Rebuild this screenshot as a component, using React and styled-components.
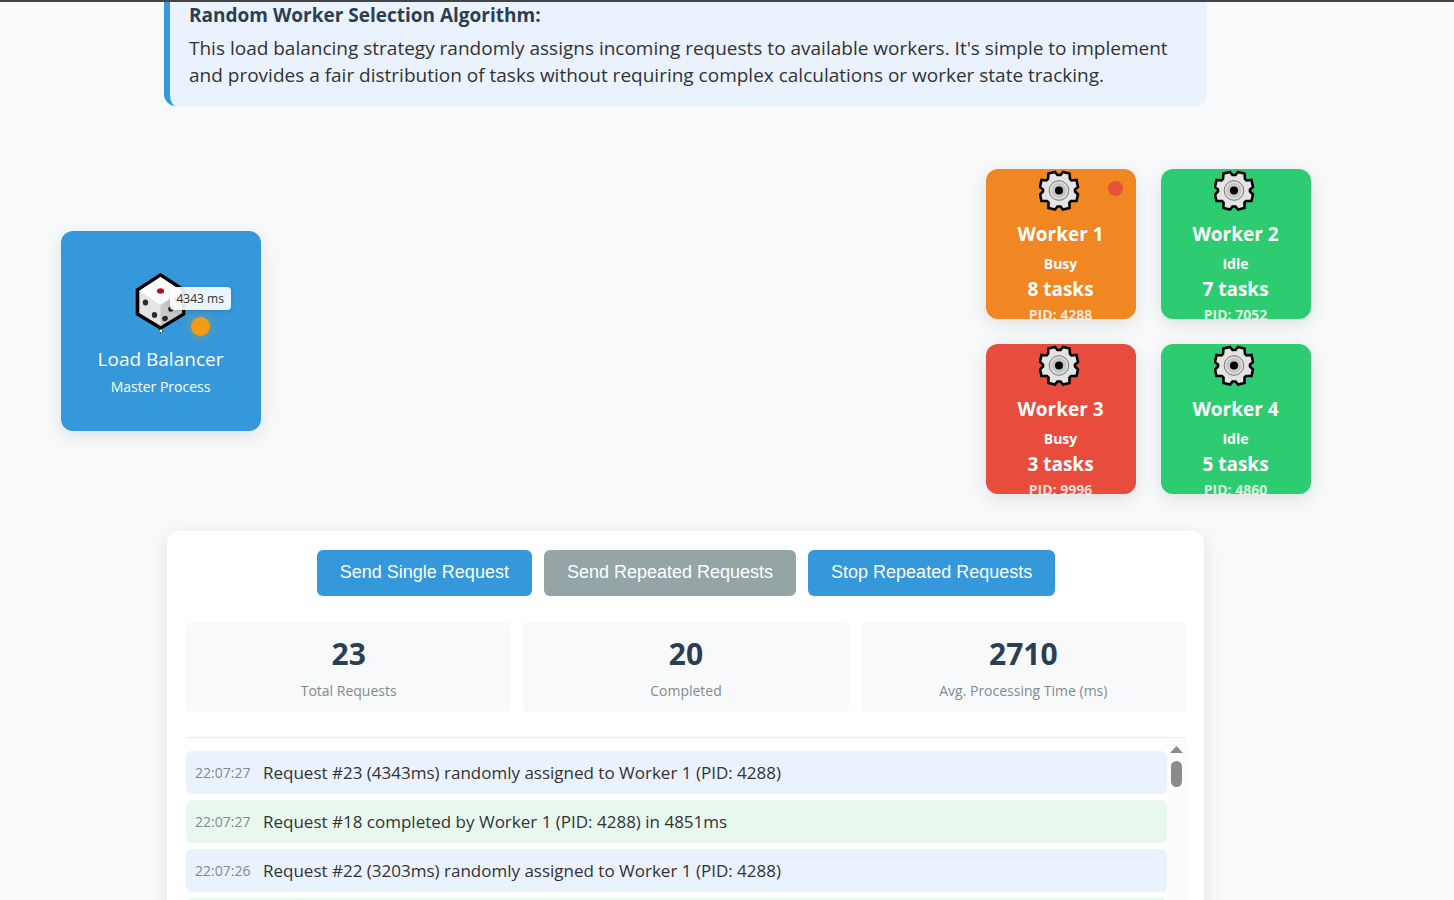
import React from "react";
import styled, { createGlobalStyle } from "styled-components";

const GlobalStyle = createGlobalStyle`
  *, *::before, *::after { box-sizing: border-box; }
  body {
    margin: 0;
    background: #f8f9fb;
    color: #333;
    font-family: "Segoe UI", "Open Sans", "Noto Sans", sans-serif;
  }
`;

const Page = styled.div`
  height: 100vh;
  overflow: hidden;
  border-top: 2px solid #444;
  padding-right: 83px;
  display: flex;
  flex-direction: column;
  align-items: center;
`;

const Banner = styled.section`
  flex: none;
  width: 80%;
  max-width: 1043px;
  height: 104px;
  padding: 0 19px;
  border-left: 6px solid #3498db;
  border-radius: 0 0 12px 12px;
  background: #eaf2fd;
`;

const BannerTitle = styled.h2`
  margin: 0 0 6px;
  color: #2c3e50;
  font-size: 19px;
  line-height: 27px;
  font-weight: 700;
`;

const BannerText = styled.p`
  margin: 0;
  font-size: 19px;
  line-height: 27px;
`;

const Arena = styled.main`
  flex: none;
  width: calc(100% - 121px);
  max-width: 1250px;
  margin: 63px 0 37px;
  display: flex;
  align-items: center;
  justify-content: space-between;
`;

const Balancer = styled.section`
  position: relative;
  width: 200px;
  height: 200px;
  margin-bottom: 1px;
  padding-top: 42px;
  display: flex;
  flex-direction: column;
  align-items: center;
  border-radius: 12px;
  background: #3498db;
  color: #fff;
  box-shadow: 0 5px 19px rgba(0, 0, 0, 0.1);

  svg { display: block; }
`;

const BalancerName = styled.h3`
  margin: 10px 0 0;
  font-size: 19px;
  line-height: 28px;
  font-weight: 400;
`;

const BalancerRole = styled.p`
  margin: 2px 0 0;
  font-size: 14px;
  line-height: 24px;
`;

const RequestDot = styled.span`
  position: absolute;
  left: 130px;
  top: 86px;
  width: 19px;
  height: 19px;
  border-radius: 50%;
  background: #f39c12;
  box-shadow: 0 0 12px rgba(243, 156, 18, 0.5);
`;

const RequestTime = styled.span`
  position: absolute;
  left: 109px;
  top: 56px;
  padding: 0 7px;
  border-radius: 4px;
  background: rgba(255, 255, 255, 0.9);
  box-shadow: 0 1px 4px rgba(0, 0, 0, 0.15);
  color: #333;
  font-size: 12px;
  line-height: 23px;
  white-space: nowrap;
`;

const WorkerGrid = styled.section`
  display: grid;
  grid-template-columns: repeat(2, 150px);
  gap: 25px;
`;

const WorkerCard = styled.article`
  position: relative;
  height: 150px;
  display: flex;
  flex-direction: column;
  align-items: center;
  border-radius: 12px;
  background: ${(p) => p.$color};
  color: #fff;
  font-weight: 700;
  box-shadow: 0 5px 19px rgba(0, 0, 0, 0.1);

  svg { display: block; flex: none; margin: 1px 3px 0 0; }
`;

const WorkerName = styled.h3`
  margin: 9px 0 0;
  font-size: 19px;
  line-height: 28px;
`;

const WorkerStatus = styled.span`
  margin-top: 4px;
  font-size: 14px;
  line-height: 24px;
`;

const WorkerTasks = styled.span`
  font-size: 19px;
  line-height: 27px;
`;

const WorkerPid = styled.span`
  font-size: 14px;
  line-height: 24px;
  opacity: 0.8;
`;

const BusyDot = styled.span`
  position: absolute;
  top: 12px;
  right: 13px;
  width: 15px;
  height: 15px;
  border-radius: 50%;
  background: #e74c3c;
  opacity: 0.9;
`;

const Panel = styled.section`
  flex: none;
  width: 80%;
  max-width: 1037px;
  padding: 19px 18px 19px 19px;
  border-radius: 12px;
  background: #fff;
  box-shadow: 0 5px 19px rgba(0, 0, 0, 0.1);
`;

const ButtonRow = styled.div`
  display: flex;
  justify-content: center;
  gap: 12px;
`;

const ActionButton = styled.button`
  height: 46px;
  padding: 0 23px 2px;
  border: 0;
  border-radius: 6px;
  background: #3498db;
  color: #fff;
  font-family: "Liberation Sans", Arial, sans-serif;
  font-size: 18px;
  cursor: pointer;

  &:disabled { background: #95a5a6; cursor: not-allowed; }
`;

const Stats = styled.dl`
  margin: 26px 0 25px;
  display: grid;
  grid-template-columns: repeat(3, 1fr);
  gap: 12px;
`;

const Stat = styled.div`
  height: 90px;
  padding-top: 12px;
  display: flex;
  flex-direction: column-reverse;
  justify-content: flex-end;
  align-items: center;
  border-radius: 6px;
  background: #f8f9fb;
`;

const StatValue = styled.dd`
  margin: 0;
  color: #2c3e50;
  font-size: 30px;
  line-height: 40px;
  font-weight: 700;
`;

const StatLabel = styled.dt`
  margin-top: 5px;
  color: #7f8c8d;
  font-size: 14px;
  line-height: 24px;
`;

const LogArea = styled.div`
  height: 376px;
  display: flex;
  border-top: 1px solid #e8eaec;
`;

const LogList = styled.ol`
  flex: 1;
  margin: 0;
  padding: 13px 0 0;
  list-style: none;
  overflow: hidden;
`;

const LogEntry = styled.li`
  height: 43px;
  margin-bottom: 6px;
  padding: 0 9px;
  display: flex;
  align-items: center;
  gap: 12px;
  border-radius: 6px;
  background: ${(p) => (p.$done ? "#e8f8ee" : "#eaf2fd")};
  font-size: 17px;
  line-height: 27px;
`;

const LogTime = styled.time`
  width: 56px;
  color: #7f8c8d;
  font-size: 14px;
`;

const ScrollTrack = styled.div`
  width: 19px;
  padding-top: 8px;
  display: flex;
  flex-direction: column;
  align-items: center;
  gap: 8px;
  background: #fcfcfc;
`;

const ScrollThumb = styled.div`
  width: 11px;
  height: 26px;
  border-radius: 6px;
  background: #8b8b8b;
`;

const Dice = () => (
  <svg width="52" height="62" viewBox="0 0 52 62" aria-hidden="true">
    <path d="M25.500 2 L48.500 17 V41 L25.500 55 L2.500 41 V17 Z" fill="#e4e4e4" stroke="#000" strokeWidth="3.600" />
    <path d="M25.500 4 L47 18 L25.500 32 L4 18 Z" fill="#fff" />
    <path d="M25.500 32 L47 18 V40 L25.500 53 Z" fill="#c8c8c8" />
    <ellipse cx="25.500" cy="18" rx="3.600" ry="2.800" fill="#b90f22" />
    <g fill="#2b2b2b">
      <ellipse cx="10.500" cy="29.500" rx="2.700" ry="2.900" />
      <ellipse cx="19.500" cy="42" rx="2.700" ry="2.900" />
      <ellipse cx="30" cy="45.500" rx="2.900" ry="2.600" transform="rotate(-35 30 45.500)" />
      <ellipse cx="36" cy="36" rx="2.900" ry="2.600" transform="rotate(-35 36 36)" />
      <ellipse cx="42.500" cy="26.500" rx="2.900" ry="2.600" transform="rotate(-35 42.500 26.500)" />
    </g>
    <circle cx="26" cy="58" r="1.700" fill="#fff" stroke="#000" strokeWidth="1" strokeDasharray="1.300 1.300" />
  </svg>
);

const Gear = () => (
  <svg width="41" height="41" viewBox="0 0 41 41" aria-hidden="true">
    <path
      d="M9.500 3.500 L16 2 L18.500 5 H21.500 L24 2 L30.500 3.500 L31 9 L32.500 10.500 L37.500 10 L39 17 L36 19.500 V21.500 L39 24.500 L37.500 31 H32 L30.500 32.500 V38 L24 39.500 L21.500 36.500 H18.500 L16 39.500 L9.500 38 V32.500 L8 31 H2.500 L1 24.500 L4 21.500 V19.500 L1 17 L2.500 10 L7.500 10.500 L9 9 Z"
      fill="#e4e4e4"
      stroke="#000"
      strokeWidth="2.600"
      strokeLinejoin="miter"
    />
    <circle cx="20" cy="20.500" r="9.800" fill="#dcdcdc" stroke="#777" strokeWidth="1" />
    <circle cx="20" cy="20.500" r="7.500" fill="#c6c6c6" />
    <circle cx="20" cy="20.500" r="4" fill="#000" />
  </svg>
);

const WORKERS = [
  { id: 1, status: "Busy", tasks: 8, pid: 4288, color: "#f08722", dot: true },
  { id: 2, status: "Idle", tasks: 7, pid: 7052, color: "#2ecc71" },
  { id: 3, status: "Busy", tasks: 3, pid: 9996, color: "#e74c3c" },
  { id: 4, status: "Idle", tasks: 5, pid: 4860, color: "#2ecc71" },
];

const STATS = [
  ["Total Requests", "23"],
  ["Completed", "20"],
  ["Avg. Processing Time (ms)", "2710"],
];

const LOG = [
  { time: "22:07:27", text: "Request #23 (4343ms) randomly assigned to Worker 1 (PID: 4288)" },
  { time: "22:07:27", text: "Request #18 completed by Worker 1 (PID: 4288) in 4851ms", done: true },
  { time: "22:07:26", text: "Request #22 (3203ms) randomly assigned to Worker 1 (PID: 4288)" },
  { time: "", text: "", done: true },
];

export default function App() {
  return (
    <Page>
      <GlobalStyle />
      <Banner>
        <BannerTitle>Random Worker Selection Algorithm:</BannerTitle>
        <BannerText>
          This load balancing strategy randomly assigns incoming requests to available workers. It's simple to
          implement and provides a fair distribution of tasks without requiring complex calculations or worker state
          tracking.
        </BannerText>
      </Banner>

      <Arena>
        <Balancer>
          <Dice />
          <BalancerName>Load Balancer</BalancerName>
          <BalancerRole>Master Process</BalancerRole>
          <RequestTime>4343 ms</RequestTime>
          <RequestDot />
        </Balancer>
        <WorkerGrid>
          {WORKERS.map((w) => (
            <WorkerCard key={w.id} $color={w.color}>
              <Gear />
              <WorkerName>Worker {w.id}</WorkerName>
              <WorkerStatus>{w.status}</WorkerStatus>
              <WorkerTasks>{w.tasks} tasks</WorkerTasks>
              <WorkerPid>PID: {w.pid}</WorkerPid>
              {w.dot && <BusyDot />}
            </WorkerCard>
          ))}
        </WorkerGrid>
      </Arena>

      <Panel>
        <ButtonRow>
          <ActionButton type="button">Send Single Request</ActionButton>
          <ActionButton type="button" disabled>Send Repeated Requests</ActionButton>
          <ActionButton type="button">Stop Repeated Requests</ActionButton>
        </ButtonRow>
        <Stats>
          {STATS.map(([label, value]) => (
            <Stat key={label}>
              <StatLabel>{label}</StatLabel>
              <StatValue>{value}</StatValue>
            </Stat>
          ))}
        </Stats>
        <LogArea>
          <LogList>
            {LOG.map((entry, i) => (
              <LogEntry key={i} $done={entry.done}>
                <LogTime>{entry.time}</LogTime>
                <span>{entry.text}</span>
              </LogEntry>
            ))}
          </LogList>
          <ScrollTrack aria-hidden="true">
            <svg width="13" height="7" viewBox="0 0 13 7">
              <path d="M6.500 0 L13 7 H0 Z" fill="#8b8b8b" />
            </svg>
            <ScrollThumb />
          </ScrollTrack>
        </LogArea>
      </Panel>
    </Page>
  );
}
